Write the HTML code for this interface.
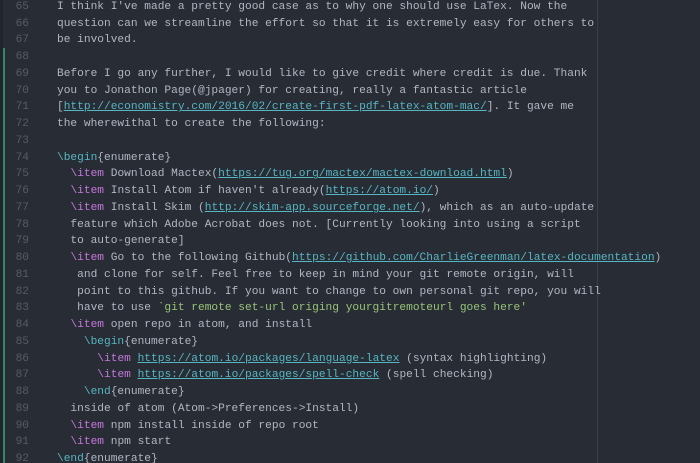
<!DOCTYPE html>
<html><head><style>
html,body{margin:0;padding:0;width:700px;height:463px;overflow:hidden;background:#282c34;}
.ed{position:relative;width:700px;height:463px;font-family:"Liberation Mono",monospace;font-size:11.2px;}
.sh{position:absolute;left:0;top:1px;width:700px;height:463px;}
.wg{position:absolute;left:597px;top:0;width:1px;height:463px;background:#3b4048;}
.edge{position:absolute;left:0;top:0;width:3px;height:463px;background:#21252b;}
.git{position:absolute;left:3px;top:48px;width:2px;height:415px;background:#43d08a;opacity:.55;}
.ln{position:absolute;left:0;width:29px;text-align:right;color:#565c67;height:16.74px;line-height:16.74px;}
.tx{position:absolute;left:57px;white-space:pre;color:#b0b7c3;height:16.74px;line-height:16.74px;}
.k{color:#c678dd}.b{color:#56b6c2}.u{color:#56b6c2;text-decoration:underline}.s{color:#98c379}
</style></head><body><div class="ed">
<div class="edge"></div><div class="git"></div><div class="wg"></div>
<div class="sh">
<div class="ln" style="top:-2px">65</div><div class="tx" style="top:-2px">I think I've made a pretty good case as to why one should use LaTex. Now the</div>
<div class="ln" style="top:14.74px">66</div><div class="tx" style="top:14.74px">question can we streamline the effort so that it is extremely easy for others to</div>
<div class="ln" style="top:31.48px">67</div><div class="tx" style="top:31.48px">be involved.</div>
<div class="ln" style="top:48.22px">68</div>
<div class="ln" style="top:64.96px">69</div><div class="tx" style="top:64.96px">Before I go any further, I would like to give credit where credit is due. Thank</div>
<div class="ln" style="top:81.7px">70</div><div class="tx" style="top:81.7px">you to Jonathon Page(@jpager) for creating, really a fantastic article</div>
<div class="ln" style="top:98.44px">71</div><div class="tx" style="top:98.44px">[<span class="u">http://economistry.com/2016/02/create-first-pdf-latex-atom-mac/</span>]. It gave me</div>
<div class="ln" style="top:115.18px">72</div><div class="tx" style="top:115.18px">the wherewithal to create the following:</div>
<div class="ln" style="top:131.92px">73</div>
<div class="ln" style="top:148.66px">74</div><div class="tx" style="top:148.66px"><span class="b">\begin</span>{enumerate}</div>
<div class="ln" style="top:165.4px">75</div><div class="tx" style="top:165.4px">  <span class="k">\item</span> Download Mactex(<span class="u">https://tug.org/mactex/mactex-download.html</span>)</div>
<div class="ln" style="top:182.14px">76</div><div class="tx" style="top:182.14px">  <span class="k">\item</span> Install Atom if haven't already(<span class="u">https://atom.io/</span>)</div>
<div class="ln" style="top:198.88px">77</div><div class="tx" style="top:198.88px">  <span class="k">\item</span> Install Skim (<span class="u">http://skim-app.sourceforge.net/</span>), which as an auto-update</div>
<div class="ln" style="top:215.62px">78</div><div class="tx" style="top:215.62px">  feature which Adobe Acrobat does not. [Currently looking into using a script</div>
<div class="ln" style="top:232.36px">79</div><div class="tx" style="top:232.36px">  to auto-generate]</div>
<div class="ln" style="top:249.1px">80</div><div class="tx" style="top:249.1px">  <span class="k">\item</span> Go to the following Github(<span class="u">https://github.com/CharlieGreenman/latex-documentation</span>)</div>
<div class="ln" style="top:265.84px">81</div><div class="tx" style="top:265.84px">   and clone for self. Feel free to keep in mind your git remote origin, will</div>
<div class="ln" style="top:282.58px">82</div><div class="tx" style="top:282.58px">   point to this github. If you want to change to own personal git repo, you will</div>
<div class="ln" style="top:299.32px">83</div><div class="tx" style="top:299.32px">   have to use <span class="s">`git remote set-url origing yourgitremoteurl goes here'</span></div>
<div class="ln" style="top:316.06px">84</div><div class="tx" style="top:316.06px">  <span class="k">\item</span> open repo in atom, and install</div>
<div class="ln" style="top:332.8px">85</div><div class="tx" style="top:332.8px">    <span class="b">\begin</span>{enumerate}</div>
<div class="ln" style="top:349.54px">86</div><div class="tx" style="top:349.54px">      <span class="k">\item</span> <span class="u">https://atom.io/packages/language-latex</span> (syntax highlighting)</div>
<div class="ln" style="top:366.28px">87</div><div class="tx" style="top:366.28px">      <span class="k">\item</span> <span class="u">https://atom.io/packages/spell-check</span> (spell checking)</div>
<div class="ln" style="top:383.02px">88</div><div class="tx" style="top:383.02px">    <span class="b">\end</span>{enumerate}</div>
<div class="ln" style="top:399.76px">89</div><div class="tx" style="top:399.76px">  inside of atom (Atom-&gt;Preferences-&gt;Install)</div>
<div class="ln" style="top:416.5px">90</div><div class="tx" style="top:416.5px">  <span class="k">\item</span> npm install inside of repo root</div>
<div class="ln" style="top:433.24px">91</div><div class="tx" style="top:433.24px">  <span class="k">\item</span> npm start</div>
<div class="ln" style="top:449.98px">92</div><div class="tx" style="top:449.98px"><span class="b">\end</span>{enumerate}</div>
</div>
</div></body></html>
